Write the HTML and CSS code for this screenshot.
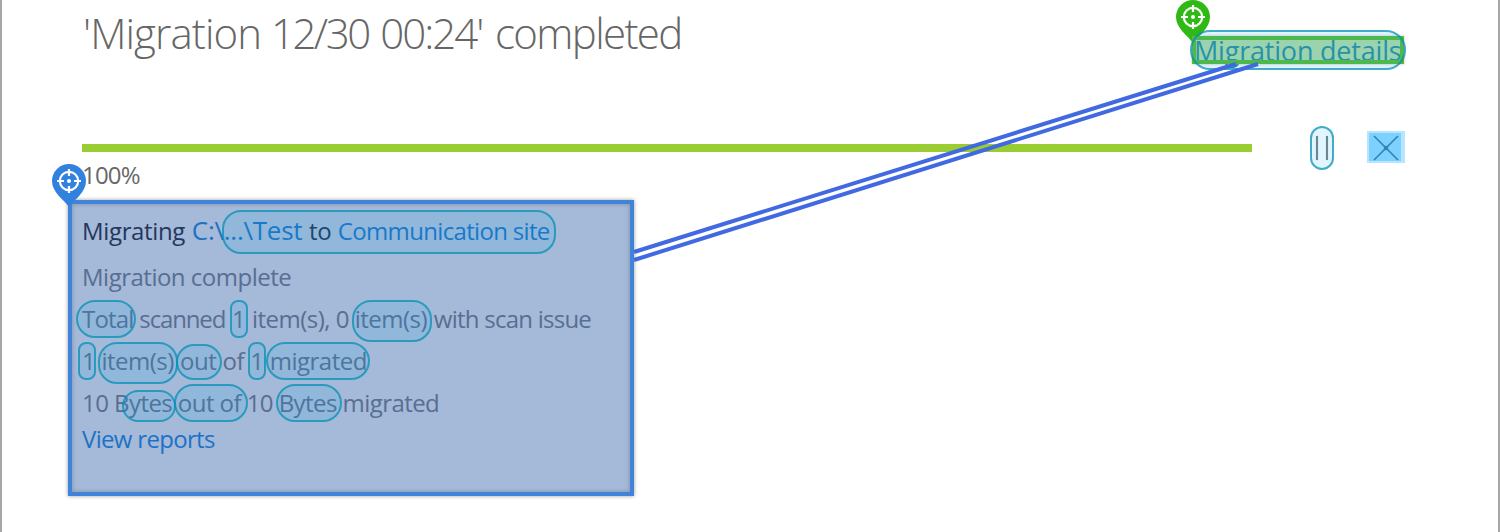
FILE: index.html
```html
<!DOCTYPE html>
<html lang="en">
<head>
<meta charset="utf-8">
<title>Migration completed</title>
<link rel="stylesheet" href="styles.css">
</head>
<body>
<main class="window">
  <header class="header">
    <h1 class="title"><span class="name">'Migration</span> <span class="date">12/30</span> <span class="time">00:24'</span> <span class="state">completed</span></h1>
    <a class="details"><span class="details-text">Migration details</span></a>
  </header>
  <section class="progress">
    <div class="bar"></div>
    <div class="pause"><i></i><i></i></div>
    <div class="close"><svg width="24" height="24" viewBox="0 0 24 24"><path d="M0 0L24 24M24 0L0 24"/><rect x="10.7" y="10.7" width="2.6" height="2.6"/></svg></div>
  </section>
  <div class="percent">100%</div>
  <section class="panel">
    <p class="line first"><span class="migrating">Migrating</span> <a class="path">C:\...\Test</a> <span class="to">to</span> <a class="site">Communication site</a></p>
    <p class="line complete">Migration complete</p>
    <p class="line scanned"><span class="total">Total</span> <span class="verb">scanned</span> <span class="one">1</span> <span class="count">item(s),</span> 0 item(s) <span class="issue">with scan issue</span></p>
    <p class="line items">1 item(s) out of 1 migrated</p>
    <p class="line bytes">10 Bytes out of 10 Bytes migrated</p>
    <p class="line reports"><a>View reports</a></p>
  </section>

  <svg class="overlay" width="1500" height="532" viewBox="0 0 1500 532">
    <defs>
      <g id="pin">
        <path d="M0-17A17 17 0 0 1 17 0C17 11 6 18 0 26C-6 18-17 11-17 0A17 17 0 0 1 0-17Z"/>
        <g fill="none" stroke="#fff" stroke-width="2.2"><circle r="9.2"/><path d="M0-12V-5M0 12V5M-12 0H-5M12 0H5"/></g>
        <circle r="2" fill="#fff"/>
      </g>
    </defs>
    <use href="#pin" x="69" y="181" fill="#3182de"/>
    <use href="#pin" x="1193" y="17" fill="#2fb914"/>
    <rect class="target" x="1194" y="38" width="208" height="24"/>
    <g class="marks">
      <rect x="1191" y="31" width="214" height="38" rx="19"/>
      <rect x="1311" y="127" width="22" height="42" rx="11"/>
      <rect x="223" y="211" width="332" height="42" rx="18"/>
      <rect x="77" y="301" width="58" height="36" rx="18"/>
      <rect x="231" y="301" width="16" height="36" rx="7"/>
      <rect x="353" y="301" width="78" height="40" rx="18"/>
      <rect x="79" y="343" width="16" height="36" rx="7"/>
      <rect x="99" y="343" width="78" height="40" rx="18"/>
      <rect x="177" y="345" width="44" height="34" rx="17"/>
      <rect x="249" y="343" width="16" height="36" rx="7"/>
      <rect x="267" y="343" width="102" height="36" rx="18"/>
      <rect x="123" y="391" width="52" height="30" rx="15"/>
      <rect x="175" y="385" width="72" height="36" rx="18"/>
      <rect x="277" y="385" width="64" height="36" rx="18"/>
    </g>
    <g class="connector"><path d="M634 252L1236 64"/><path d="M634 260L1258 64"/></g>
  </svg>
</main>
</body>
</html>
```
FILE: styles.css
```css
* { box-sizing: border-box; }
body { margin: 0; background: #fff; font-family: "Open Sans", "Noto Sans", sans-serif; }
.window { position: relative; width: 1500px; height: 532px; overflow: hidden; border: solid #a6a6a6; border-width: 0 2px; }
.header { display: flex; justify-content: space-between; height: 64px; padding: 0 94px 0 80px; }
.title { margin: 4px 0 0; font-size: 42px; font-weight: 300; line-height: 58px; letter-spacing: -1.2px; color: #666; white-space: nowrap; }
.name { letter-spacing: -.9px; margin-left: 1px; }
.date { letter-spacing: -2.5px; }
.time { letter-spacing: -2px; margin-left: 2px; }
.state { letter-spacing: -1.65px; margin-left: 3px; }
.details { width: 212px; height: 28px; margin-top: 36px; padding: 4px; background: #b0d9a6; box-shadow: 0 0 3px rgba(0,0,0,.25); color: #2d909c; }
.details-text { display: block; margin-left: -2px; height: 20px; font-size: 27px; line-height: 22px; letter-spacing: -.2px; white-space: nowrap; }
.target { fill: none; stroke: #58bb37; stroke-width: 4; }
.progress { display: flex; height: 44px; margin: 62px 93px 0 80px; align-items: center; }
.bar { width: 1170px; height: 8px; background: #9acd32; }
.pause { display: flex; gap: 8px; margin-left: 64px; }
.pause i { width: 2px; height: 24px; background: #7b8286; box-shadow: 0 0 1px #9eb0bc; }
.close { display: grid; place-items: center; width: 38px; height: 32px; margin: -2px 0 0 39px; background: #7dd1ff; border: solid #b5e5ff; border-width: 2px 4px 2px 2px; }
.close svg { fill: #3284b3; stroke: #3284b3; stroke-width: 1.7; margin: 2px 0 0 2px; overflow: visible; }
.percent { height: 30px; padding-left: 80px; margin-top: -13px; font-size: 24px; line-height: 36px; letter-spacing: -.8px; color: #686868; }
.panel { width: 566px; height: 296px; margin: 13px 0 0 66px; padding: 8px 0 0 10px; border: 4px solid #4084da; background: #a5b9d8; box-shadow: 0 0 4px rgba(0,0,0,.4), inset 0 0 4px rgba(0,0,0,.25); color: #586e92; }
.line { margin: 0 0 6px; height: 36px; font-size: 24px; line-height: 36px; letter-spacing: -.5px; white-space: nowrap; }
.line a { color: #1c72c6; }
.first { margin-bottom: 11px; color: #24375c; }
.migrating { letter-spacing: -.35px; }
.path { margin-left: 1px; font-size: 26px; letter-spacing: -.25px; }
.to { margin-left: 1px; }
.site { margin-left: 1px; letter-spacing: -.67px; }
.total { letter-spacing: -.8px; }
.verb { letter-spacing: -1.15px; }
.one { margin-left: 1px; }
.count { margin-left: 1px; }
.issue { margin-left: 1px; letter-spacing: -.75px; }
.items { word-spacing: .5px; }
.bytes { margin-bottom: 0; letter-spacing: -.56px; }
.reports { letter-spacing: -.68px; }
.overlay { position: absolute; left: -2px; top: 0; }
.marks { fill: rgba(0,175,240,.12); stroke: rgba(0,142,180,.73); stroke-width: 2; }
.connector { stroke: #4169e1; stroke-width: 4; }
```
